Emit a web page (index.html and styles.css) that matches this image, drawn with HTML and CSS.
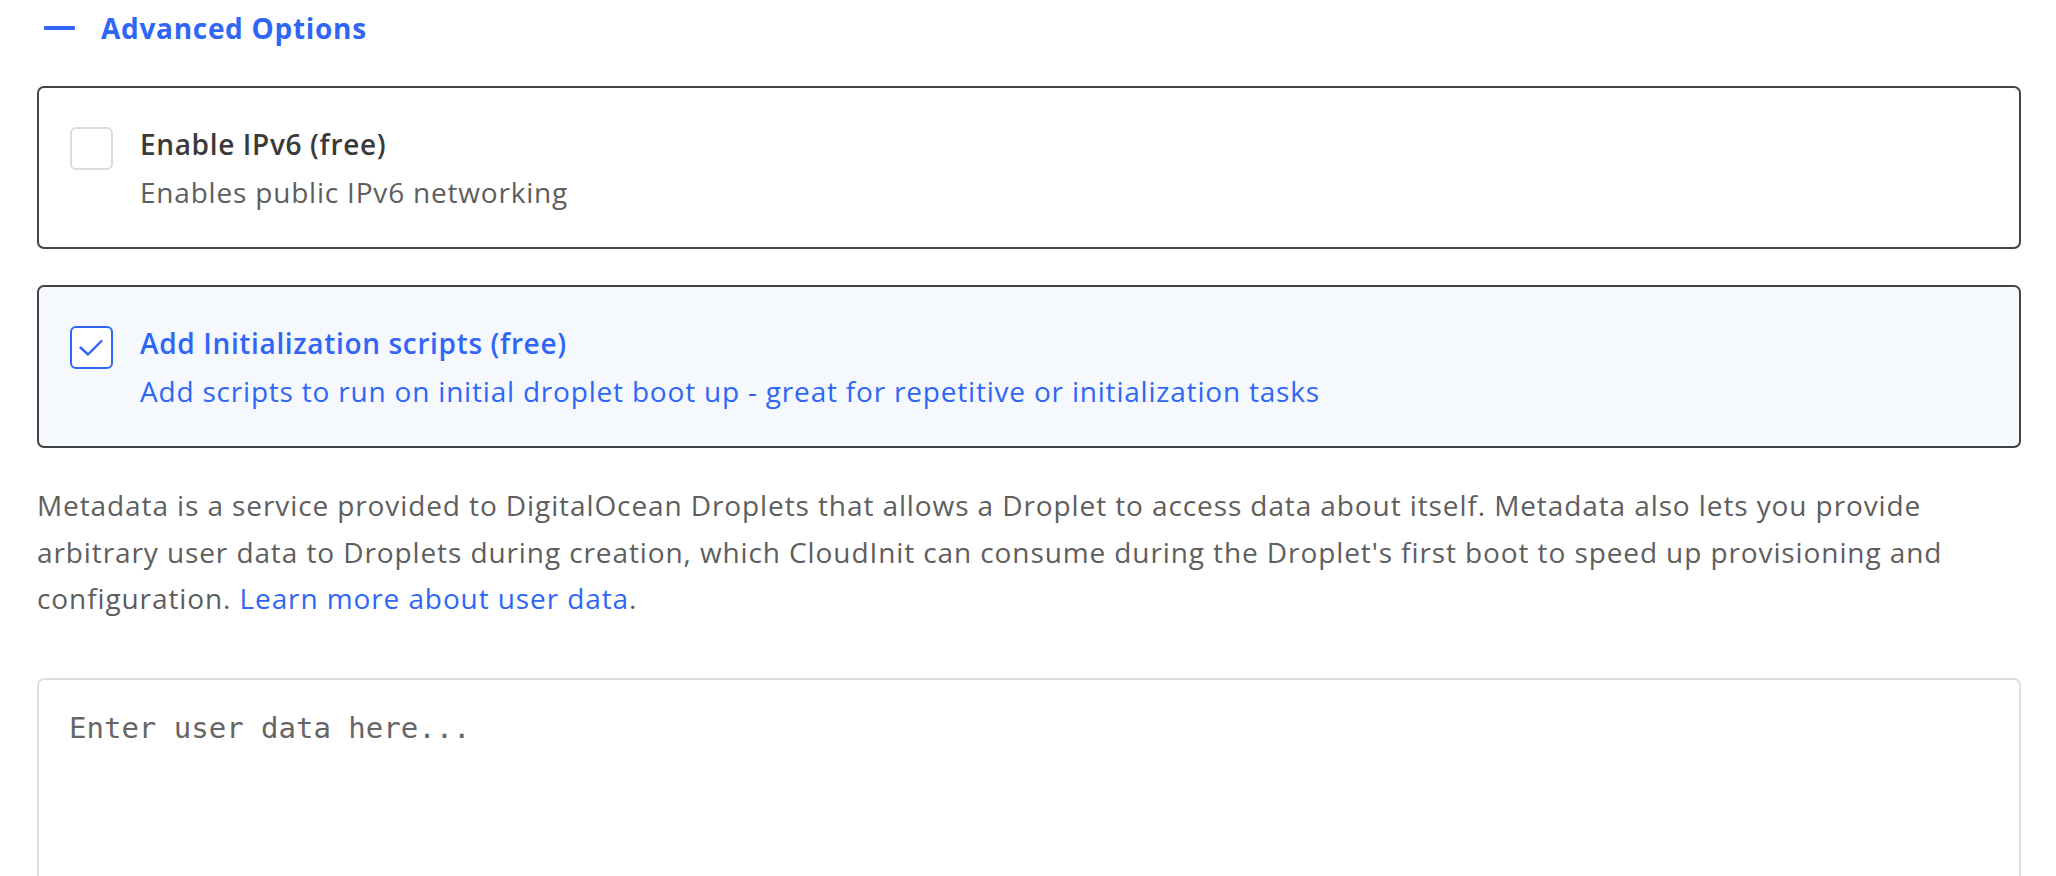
FILE: index.html
```html
<!DOCTYPE html>
<html lang="en">
<head>
<meta charset="utf-8">
<title>Advanced Options</title>
<link rel="stylesheet" href="styles.css">
</head>
<body>
<main class="page">
  <div class="section-head">
    <span class="dash"></span>
    <span class="section-title">Advanced Options</span>
  </div>

  <div class="option">
    <span class="checkbox"></span>
    <div class="option-text">
      <div class="option-title">Enable IPv6 (free)</div>
      <div class="option-desc">Enables public IPv6 networking</div>
    </div>
  </div>

  <div class="option option-checked">
    <span class="checkbox checkbox-on">
      <svg width="42" height="42" viewBox="0 0 42 42"><path d="M10.5 21.5 L18 28.5 L31.5 15" fill="none" stroke="#2f66f5" stroke-width="2.4" stroke-linecap="round" stroke-linejoin="round"/></svg>
    </span>
    <div class="option-text">
      <div class="option-title">Add Initialization scripts (free)</div>
      <div class="option-desc">Add scripts to run on initial droplet boot up - great for repetitive or initialization tasks</div>
    </div>
  </div>

  <p class="info">Metadata is a service provided to DigitalOcean Droplets that allows a Droplet to access data about itself. Metadata also lets you provide arbitrary user data to Droplets during creation, which CloudInit can consume during the Droplet's first boot to speed up provisioning and configuration. <a class="link" href="#">Learn more about user data</a>.</p>

  <textarea class="userdata" placeholder="Enter user data here..."></textarea>
</main>
</body>
</html>
```

FILE: styles.css
```css
html, body {
  margin: 0;
  padding: 0;
  background: #ffffff;
}

body {
  font-family: "Open Sans", Lato, "Liberation Sans", sans-serif;
  color: #5e5e5e;
  overflow: hidden;
}

.page {
  width: 1984px;
  padding: 0 36px 0 37px;
}

.section-head {
  display: flex;
  align-items: center;
  height: 40px;
  padding-top: 8px;
  gap: 26px;
}

.dash {
  display: block;
  width: 31px;
  height: 4px;
  margin-left: 7px;
  background: #2f66f5;
  border-radius: 1px;
}

.section-title {
  font-size: 28px;
  font-weight: 700;
  letter-spacing: 0.7px;
  color: #2f66f5;
  line-height: 40px;
}

.option {
  display: flex;
  align-items: flex-start;
  box-sizing: border-box;
  height: 163px;
  margin-top: 38px;
  padding: 33px 20px 0 31px;
  border: 2px solid #444444;
  border-radius: 7px;
  background: #ffffff;
}

.option + .option {
  margin-top: 36px;
}

.option-checked {
  background: #f5f8fd;
}

.checkbox {
  flex: none;
  display: block;
  box-sizing: border-box;
  width: 43px;
  height: 43px;
  margin-top: 6px;
  border: 2px solid #dcdcdc;
  border-radius: 6px;
  background: #ffffff;
  position: relative;
}

.checkbox-on {
  border-color: #2f66f5;
}

.checkbox-on svg {
  position: absolute;
  left: -2px;
  top: -2px;
}

.option-text {
  margin-left: 27px;
}

.option-title {
  font-size: 28px;
  font-weight: 600;
  letter-spacing: 0.65px;
  line-height: 46px;
  color: #3a3a3a;
}

.option-desc {
  font-size: 28px;
  letter-spacing: 0.8px;
  line-height: 46px;
  margin-top: 2px;
  color: #5e5e5e;
}

.option-checked .option-title,
.option-checked .option-desc {
  color: #2f66f5;
}

.info {
  margin: 34px 0 0 0;
  font-size: 28px;
  letter-spacing: 0.9px;
  line-height: 46.5px;
  color: #5e5e5e;
}

.link {
  color: #2f66f5;
  text-decoration: none;
}

.userdata {
  display: block;
  box-sizing: border-box;
  width: 1984px;
  height: 260px;
  margin-top: 56px;
  padding: 28px 30px;
  border: 2px solid #dedede;
  border-radius: 7px;
  resize: none;
  font-family: "DejaVu Sans Mono", "Liberation Mono", monospace;
  font-size: 29px;
  line-height: 40px;
  color: #333333;
  background: #ffffff;
  outline: none;
}

.userdata::placeholder {
  color: #666666;
  opacity: 1;
}
```
